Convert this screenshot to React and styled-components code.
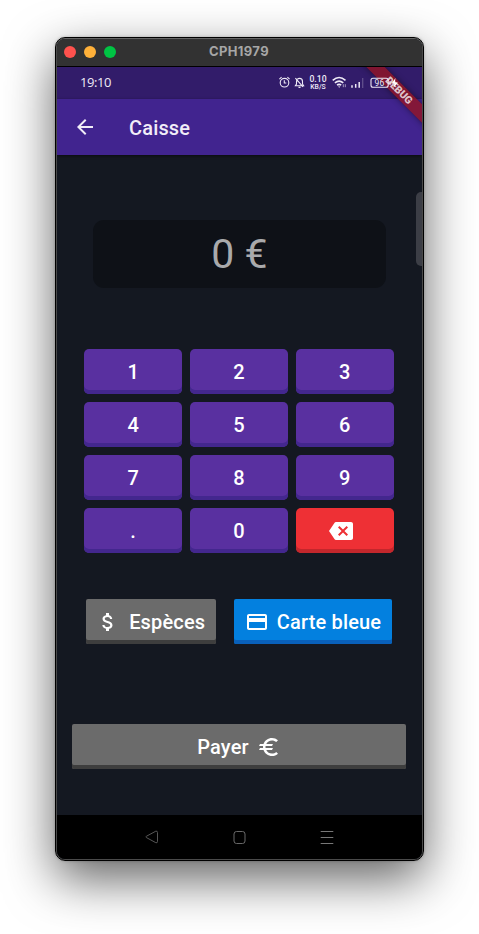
import React from "react";
import styled, { createGlobalStyle } from "styled-components";
import { MdArrowBack, MdBackspace, MdAttachMoney, MdCreditCard, MdEuro } from "react-icons/md";

const GlobalStyle = createGlobalStyle`
  * { box-sizing: border-box; }
  body { margin: 0; background: #fff; font-family: Roboto, sans-serif; overflow: hidden; }
  svg { display: block; flex: none; }
`;

const Desktop = styled.main`
  width: 479px;
  height: 934px;
  padding: 37px 55px;
  overflow: hidden;
`;

const DeviceWindow = styled.section`
  width: 369px;
  height: 824px;
  padding: 1px;
  border: 1px solid #000;
  border-radius: 10px;
  background: linear-gradient(#666, #4a4a4a 12px);
  box-shadow: 0 18px 50px rgba(0, 0, 0, 0.62), 0 0 3px rgba(0, 0, 0, 0.25);
`;

const Clip = styled.div`
  display: flex;
  flex-direction: column;
  height: 100%;
  overflow: hidden;
  border-radius: 8px;
  background: #141821;
`;

const Screen = styled.div`
  position: relative;
  display: flex;
  flex-direction: column;
  flex: 1;
  overflow: hidden;
`;

const TitleBar = styled.header`
  display: grid;
  grid-template-columns: 70px 1fr 70px;
  align-items: center;
  height: 28px;
  padding: 0 8px 0 7px;
  background: #323232;
  border-bottom: 1px solid #000;
`;

const Lights = styled.div`
  display: flex;
  gap: 8px;
  margin-top: -1px;
`;

const Light = styled.i`
  width: 12px;
  height: 12px;
  border-radius: 50%;
  background: ${(p) => p.$color};
`;

const WindowTitle = styled.span`
  margin-top: -3px;
  text-align: center;
  font: 700 13px/26px Inter, sans-serif;
  letter-spacing: 0.35px;
  color: #a6a6a6;
`;

const StatusBar = styled.div`
  display: flex;
  align-items: center;
  justify-content: space-between;
  height: 32px;
  padding: 0 22px 0 23px;
  background: #321c6a;
  color: #eeeaf6;
`;

const IconStrip = styled.svg`
  position: relative;
  z-index: 1;
`;

const Clock = styled.span`
  margin-top: -2px;
  font: 400 13px/30px "Open Sans", sans-serif;
  letter-spacing: -0.45px;
`;

const AppBar = styled.div`
  position: relative;
  display: flex;
  align-items: center;
  gap: 32.5px;
  height: 56px;
  padding-left: 15.5px;
  background: #41248f;
  color: #f1edf8;
  box-shadow: 0 1px 3px rgba(0, 0, 0, 0.55);
`;

const ScreenTitle = styled.h1`
  margin: 1px 0 0;
  font: 500 20px/24px Roboto, sans-serif;
  letter-spacing: 0.15px;
`;

const Ribbon = styled.div`
  position: absolute;
  top: 17px;
  right: -37px;
  width: 120px;
  height: 13px;
  transform: rotate(45deg);
  background: rgba(147, 20, 35, 0.8);
  box-shadow: 0 0 6px rgba(0, 0, 0, 0.45);
  color: rgba(255, 255, 255, 0.75);
  text-align: center;
  font: 900 10.5px/13px Roboto, sans-serif;
`;

const EdgeHandle = styled.div`
  position: absolute;
  top: 125px;
  right: 0;
  width: 6px;
  height: 74px;
  border-radius: 5px 0 0 5px;
  background: #3c3e46;
`;

const Body = styled.div`
  display: flex;
  flex-direction: column;
  flex: 1;
  padding: 65px 16px 0 15px;
`;

const Amount = styled.div`
  height: 68px;
  margin: 0 20px 0 21px;
  border-radius: 11px;
  background: #0e1117;
  color: #a9aaac;
  text-align: center;
  font: 400 41px/69px Roboto, sans-serif;
`;

const Keypad = styled.div`
  display: grid;
  grid-template-columns: repeat(3, 97.6px);
  grid-auto-rows: 45px;
  gap: 8px 8.2px;
  margin: 61px 0 0 12.4px;
`;

const tones = {
  purple: ["#5930a0", "#43278e"],
  red: ["#ee3035", "#c3272c"],
  grey: ["#6b6b6b", "#3e3e3e"],
  blue: ["#0380df", "#0960ba"],
};

const Button = styled.button`
  display: flex;
  align-items: center;
  justify-content: center;
  width: ${(p) => p.$width || "auto"};
  height: 45px;
  gap: ${(p) => p.$gap || "8px"};
  padding: 1px ${(p) => p.$inset || "0px"} 0 0;
  border: 0;
  border-radius: ${(p) => p.$radius || "2px"};
  background: ${(p) => tones[p.$tone][0]};
  box-shadow: inset 0 -4px 0 ${(p) => tones[p.$tone][1]};
  color: #fff;
  font: 500 20px/24px Roboto, sans-serif;
  letter-spacing: 0.15px;
`;

const Methods = styled.div`
  display: flex;
  justify-content: space-between;
  margin: 46px 14px 80px;
`;

const NavBar = styled.nav`
  display: flex;
  align-items: center;
  justify-content: space-between;
  height: 44px;
  padding: 0 88px;
  background: #000;
`;

const StatusIcons = () => (
  <IconStrip width="122" height="16" viewBox="0 0 122 16" fill="none" stroke="#eeeaf6" strokeWidth="1.1">
    <circle cx="6.5" cy="7.7" r="4.3" />
    <path d="M6.3 5.2V8h2M1.4 4.2l2.2-2M11.6 4.2 9.4 2.2" />
    <path d="M17.4 10.7h8.2l-1.1-1.7V6.4c0-4-6-4-6 0V9zM20.5 12.4h2M17.4 3.2l7.6 8.7" />
    <g fill="#eeeaf6" stroke="none" fontFamily="Roboto" fontWeight="500" textAnchor="middle">
      <text x="40" y="7" fontSize="8.6">0.10</text>
      <text x="40" y="13.6" fontSize="6.8">KB/S</text>
    </g>
    <path d="M54.7 5.4c4-3.6 8.8-3.6 12.8 0M56.9 7.9c2.8-2.4 5.6-2.4 8.4 0M59 10.2c1.4-1.1 2.8-1.1 4.2 0" strokeWidth="1.5" />
    <path d="M60 11.4h2.4l-1.2 1.3z" fill="#eeeaf6" stroke="none" />
    <path d="M65.3 9.2v3M67.3 9.2v3" strokeWidth="1" opacity=".6" />
    <path d="M74 10.2v2.6M77.7 9v3.8M81.2 7v5.8" strokeWidth="1.5" />
    <path d="M84.7 3v10" strokeWidth="1.3" opacity=".25" />
    <rect x="93" y="3.3" width="17.2" height="9" rx="2" />
    <text x="101.4" y="11" fontSize="8.5" fontFamily="Roboto" textAnchor="middle" fill="#eeeaf6" stroke="none">96</text>
    <path d="M112 6v4" />
    <path d="m117.5 3-4 5.6h3l-1.3 4.4 4.7-5.6h-3z" fill="#fff" stroke="none" />
  </IconStrip>
);

const keys = ["1", "2", "3", "4", "5", "6", "7", "8", "9", ".", "0"];

export default function App() {
  return (
    <>
      <GlobalStyle />
      <Desktop>
        <DeviceWindow>
          <Clip>
            <TitleBar>
              <Lights>
                <Light $color="#ff524d" />
                <Light $color="#ffb139" />
                <Light $color="#00c443" />
              </Lights>
              <WindowTitle>CPH1979</WindowTitle>
            </TitleBar>
            <Screen>
              <StatusBar>
                <Clock>19:10</Clock>
                <StatusIcons />
              </StatusBar>
              <AppBar>
                <MdArrowBack size={24} />
                <ScreenTitle>Caisse</ScreenTitle>
              </AppBar>
              <Body>
                <Amount>0 €</Amount>
                <Keypad>
                  {keys.map((k) => (
                    <Button key={k} $tone="purple" $radius="5px">{k}</Button>
                  ))}
                  <Button $tone="red" $radius="5px" $inset="8px" aria-label="Effacer"><MdBackspace size={24} /></Button>
                </Keypad>
                <Methods>
                  <Button $tone="grey" $width="130.4px" $gap="9px" $inset="1px"><MdAttachMoney size={24} />Espèces</Button>
                  <Button $tone="blue" $width="158px"><MdCreditCard size={24} />Carte bleue</Button>
                </Methods>
                <Button $tone="grey" $width="334px"><span>Payer</span><MdEuro size={24} /></Button>
              </Body>
              <NavBar>
                <svg width="14" height="14" viewBox="0 0 14 14" fill="none" stroke="#565656">
                  <path d="M1.3 6.3 10.8 1.2Q12.5.8 12.5 2.5v9q0 1.7-1.7 1.2L1.3 7.5q-.9-.6 0-1.2Z" />
                </svg>
                <svg width="14" height="14" viewBox="0 0 14 14" fill="none" stroke="#686868">
                  <rect x="1" y="1.5" width="11" height="12" rx="2.5" />
                </svg>
                <svg width="14" height="14" viewBox="0 0 14 14" stroke="#777">
                  <path d="M.7 1.5h12.6M.7 7.5h12.6M.7 13.5h12.6" />
                </svg>
              </NavBar>
              <EdgeHandle />
              <Ribbon>DEBUG</Ribbon>
            </Screen>
          </Clip>
        </DeviceWindow>
      </Desktop>
    </>
  );
}
